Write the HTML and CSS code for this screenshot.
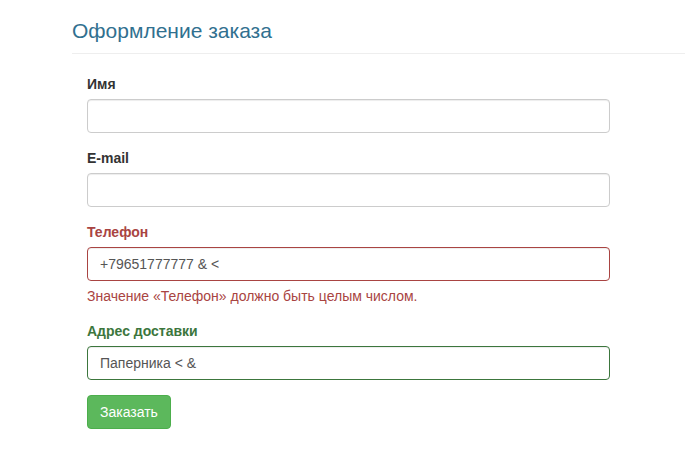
FILE: index.html
```html
<!DOCTYPE html>
<html lang="ru">
<head>
    <meta charset="UTF-8">
    <meta name="viewport" content="width=device-width, initial-scale=1.0">
    <title>Оформление заказа</title>
    <link rel="stylesheet" href="styles.css">
</head>
<body>

    <div class="wrapper">
        <div class="page-header">
            <h3>Оформление заказа</h3>
        </div>

        <form class="order-form">
            <div class="form-group">
                <label for="name">Имя</label>
                <input type="text" id="name" class="form-control">
            </div>

            <div class="form-group">
                <label for="email">E-mail</label>
                <input type="text" id="email" class="form-control">
            </div>

            <div class="form-group has-error">
                <label for="phone">Телефон</label>
                <input type="text" id="phone" class="form-control" value="+79651777777 &amp; &lt;">
                <div class="help-block">Значение «Телефон» должно быть целым числом.</div>
            </div>

            <div class="form-group has-success">
                <label for="address">Адрес доставки</label>
                <input type="text" id="address" class="form-control" value="Паперника &lt; &amp;">
            </div>

            <button type="submit" class="btn-success">Заказать</button>
        </form>
    </div>

</body>
</html>
```

FILE: styles.css
```css
body {
    font-family: "Liberation Sans", Arial, sans-serif;
    font-size: 14px;
    line-height: 20px;
    margin: 0;
    padding: 0;
    background-color: #fff;
    color: #333;
}

.wrapper {
    padding-left: 72px;
}

/* heading with the thin line under it */
.page-header {
    padding: 18px 0 9px;
    border-bottom: 1px solid #eee;
}

.page-header h3 {
    margin: 0;
    font-size: 21px;
    font-weight: 400;
    line-height: 26px;
    color: #31708f;
}

.order-form {
    width: 523px;
    padding: 20px 15px 0;
}

.form-group {
    margin-bottom: 15px;
}

label {
    display: block;
    margin-bottom: 5px;
    font-weight: 700;
}

.form-control {
    display: block;
    box-sizing: border-box;
    width: 100%;
    height: 34px;
    padding: 6px 12px;
    font-family: inherit;
    font-size: 14px;
    color: #555;
    background-color: #fff;
    border: 1px solid #ccc;
    border-radius: 4px;
    box-shadow: inset 0 1px 1px rgba(0, 0, 0, 0.075);
}

.help-block {
    margin: 5px 0 10px;
}

.has-error label,
.has-error .help-block {
    color: #a94442;
}

.has-error .form-control {
    border-color: #a94442;
}

.has-success label {
    color: #3c763d;
}

.has-success .form-control {
    border-color: #3c763d;
}

.btn-success {
    height: 34px;
    padding: 6px 12px;
    font-family: inherit;
    font-size: 14px;
    color: #fff;
    background-color: #5cb85c;
    border: 1px solid #4cae4c;
    border-radius: 4px;
    cursor: pointer;
}
```
